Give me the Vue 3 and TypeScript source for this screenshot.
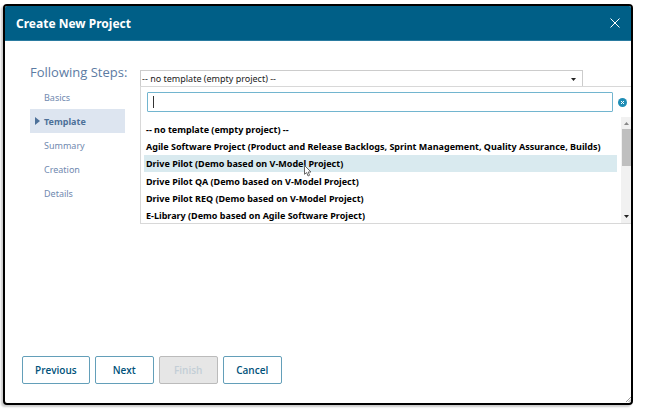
<script setup lang="ts">
import { ref } from 'vue'

interface Step {
  label: string
  current: boolean
}

const steps: Step[] = [
  { label: 'Basics', current: false },
  { label: 'Template', current: true },
  { label: 'Summary', current: false },
  { label: 'Creation', current: false },
  { label: 'Details', current: false },
]

const templates: string[] = [
  '-- no template (empty project) --',
  'Agile Software Project (Product and Release Backlogs, Sprint Management, Quality Assurance, Builds)',
  'Drive Pilot (Demo based on V-Model Project)',
  'Drive Pilot QA (Demo based on V-Model Project)',
  'Drive Pilot REQ (Demo based on V-Model Project)',
  'E-Library (Demo based on Agile Software Project)',
]

const selected = ref<string>(templates[0])
const highlighted = ref<number>(2)
const query = ref<string>('')
</script>

<template>
  <main class="dialog" role="dialog" aria-labelledby="dialog-title">
    <header class="titlebar">
      <h1 id="dialog-title">Create New Project</h1>
      <button class="close" type="button" aria-label="Close">
        <svg viewBox="0 0 10 10" width="10" height="10"><path d="M0.5 0.5 9.5 9.5M9.5 0.5 0.5 9.5" /></svg>
      </button>
    </header>

    <div class="content">
      <nav class="steps" aria-label="Following Steps">
        <h2>Following Steps:</h2>
        <ol>
          <li v-for="step in steps" :key="step.label" :class="{ current: step.current }">
            <svg v-if="step.current" class="marker" viewBox="0 0 5 8" width="5" height="8"><path d="M0 0 5 4 0 8Z" /></svg>
            <a href="#">{{ step.label }}</a>
          </li>
        </ol>
      </nav>

      <section class="picker">
        <div class="select-wrap">
          <select v-model="selected" aria-label="Template">
            <option v-for="t in templates" :key="t">{{ t }}</option>
          </select>
          <svg class="caret" viewBox="0 0 5 3" width="5" height="3"><path d="M0 0H5L2.5 3Z" /></svg>
        </div>

        <div class="panel">
          <div class="search">
            <div class="field">
              <input v-model="query" type="text" aria-label="Search templates" />
              <span v-if="!query" class="text-caret"></span>
            </div>
            <button class="clear" type="button" aria-label="Clear search" @click="query = ''">
              <svg viewBox="0 0 9 9" width="9" height="9">
                <circle cx="4.5" cy="4.5" r="4.5" />
                <path d="M3 3 6 6M6 3 3 6" />
              </svg>
            </button>
          </div>
          <div class="results">
            <ul role="listbox" aria-label="Templates">
              <li
                v-for="(t, i) in templates"
                :key="t"
                role="option"
                :aria-selected="i === highlighted"
                :class="{ active: i === highlighted }"
                @mouseenter="highlighted = i"
              >
                {{ t }}
              </li>
            </ul>
            <div class="scrollbar" aria-hidden="true">
              <svg class="up" viewBox="0 0 5 3" width="5" height="3"><path d="M0 3H5L2.5 0Z" /></svg>
              <div class="thumb"></div>
              <svg class="down" viewBox="0 0 5 3" width="5" height="3"><path d="M0 0H5L2.5 3Z" /></svg>
            </div>
          </div>
          <svg class="pointer" viewBox="0 0 8 12" width="8" height="12">
            <path d="M0.5 0.5V9.3L2.6 7.5 4.1 11 5.6 10.3 4.2 7H7Z" />
          </svg>
        </div>
      </section>
    </div>

    <footer class="actions">
      <button type="button">Previous</button>
      <button type="button">Next</button>
      <button type="button" disabled>Finish</button>
      <button type="button">Cancel</button>
    </footer>
    <svg class="grip" viewBox="0 0 5 5" width="5" height="5"><path d="M0 5 5 0M2.5 5 5 2.5" /></svg>
  </main>
</template>

<style>
body {
  margin: 0;
  background: #fff;
}
</style>

<style scoped>
* {
  box-sizing: border-box;
}

.dialog {
  position: relative;
  display: flex;
  flex-direction: column;
  min-height: calc(100vh - 9px);
  margin: 4px 27px 5px 3px;
  border: 2px solid #000;
  border-radius: 4px;
  background: #fff;
  box-shadow: -2px 2px 2px #ccc;
  font-family: "Noto Sans", "Open Sans", sans-serif;
  font-size: 9px;
}

button,
input,
select {
  font: inherit;
}

.titlebar {
  display: flex;
  align-items: center;
  justify-content: space-between;
  height: 35px;
  padding: 0 11px;
  border-bottom: 1px solid #2a7ba0;
  border-radius: 2px 2px 0 0;
  background: #005f87;
  color: #fff;
}

h1 {
  margin: 0;
  font-size: 12px;
  font-weight: 700;
}

.close {
  display: flex;
  padding: 0;
  border: 0;
  background: none;
}

.close path {
  stroke: #fff;
  fill: none;
}

.content {
  display: grid;
  grid-template-columns: 95px 1fr;
  column-gap: 15px;
  padding: 22px 0 0 25px;
}

h2 {
  margin: 0 0 4px;
  color: #5c7ba3;
  font-family: "Open Sans", "Noto Sans", sans-serif;
  font-size: 13px;
  font-weight: 400;
  line-height: 18px;
  white-space: nowrap;
}

ol,
ul {
  margin: 0;
  padding: 0;
  list-style: none;
}

ol li {
  display: flex;
  align-items: center;
  height: 24px;
  padding-left: 14px;
}

.steps a {
  color: #7089af;
  text-decoration: none;
}

.steps .current {
  position: relative;
  background: #dde5f0;
}

.steps .current a {
  color: #4d7199;
  font-weight: 700;
}

.marker {
  position: absolute;
  left: 5px;
  fill: #4d7199;
}

.picker {
  position: relative;
  min-width: 0;
  padding-top: 7px;
}

.select-wrap {
  position: relative;
  margin-right: 48px;
}

select {
  display: block;
  width: 100%;
  height: 17px;
  padding: 0 0 0 1px;
  border: 1px solid #ccc;
  border-radius: 0;
  appearance: none;
  background: #fff;
  color: #222;
}

.caret {
  position: absolute;
  top: 8px;
  right: 7px;
  fill: #222;
}

.panel {
  position: absolute;
  top: 23px;
  left: 0;
  right: 0;
  border: 1px solid #d8d8d8;
  border-right: 0;
}

.search {
  display: flex;
  align-items: center;
  gap: 5px;
  padding: 5px 4px 5px 6px;
}

.field {
  position: relative;
  flex: 1;
}

.field input {
  display: block;
  width: 100%;
  height: 20px;
  padding: 0 6px;
  border: 1px solid #72b5cf;
  border-radius: 1px;
  outline: 0;
}

.text-caret {
  position: absolute;
  top: 4px;
  left: 6px;
  width: 1px;
  height: 12px;
  background: #333;
}

.clear {
  display: flex;
  padding: 0;
  border: 0;
  background: none;
}

.clear circle {
  fill: #1f8db5;
}

.clear path {
  stroke: #fff;
}

.results {
  display: flex;
  height: 106px;
}

.results ul {
  display: grid;
  flex: 1;
  grid-auto-rows: 1fr;
  height: 104px;
  margin: 3px 4px 0 3px;
  min-width: 0;
}

.results li {
  display: flex;
  align-items: center;
  padding: 2px 0 0 2px;
  color: #000;
  font-weight: 700;
  line-height: 12px;
  white-space: nowrap;
}

.results .active {
  background: #d9eaef;
}

.scrollbar {
  display: flex;
  flex-direction: column;
  align-items: center;
  width: 10px;
  padding: 5px 0;
  background: #f1f1f1;
}

.thumb {
  align-self: flex-end;
  width: 9px;
  height: 37px;
  margin-top: 4px;
  background: #bfbfbf;
}

.up {
  fill: #888;
}

.down {
  margin-top: auto;
  fill: #222;
}

.pointer {
  position: absolute;
  top: 78px;
  left: 163px;
  fill: #fff;
  stroke: #666;
}

.actions {
  display: flex;
  gap: 5px;
  margin-top: auto;
  padding: 0 17px 19px;
}

.actions button {
  min-width: 59px;
  height: 28px;
  padding: 0 12px;
  border: 1px solid #639fb9;
  border-radius: 2px;
  background: #fff;
  color: #00527a;
  font-family: "Open Sans", "Noto Sans", sans-serif;
  font-size: 10px;
  font-weight: 600;
}

.actions button:disabled {
  border-color: #bbb;
  background: #e6e6e6;
  color: #c3ced6;
}

.grip {
  position: absolute;
  right: 0;
  bottom: 1px;
  stroke: #999;
}
</style>
